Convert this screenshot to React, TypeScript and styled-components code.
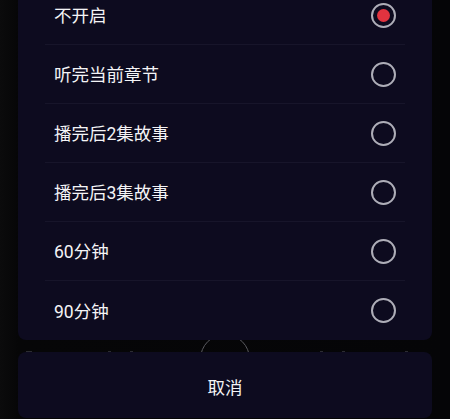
import styled, { createGlobalStyle } from "styled-components";

const GlobalStyle = createGlobalStyle`
  html, body {
    margin: 0;
    padding: 0;
    background: #050507;
  }
  body {
    font-family: Roboto, "Noto Sans CJK SC", sans-serif;
  }
`;

const options = [
  "不开启",
  "听完当前章节",
  "播完后2集故事",
  "播完后3集故事",
  "60分钟",
  "90分钟",
];

const Page = styled.div`
  position: relative;
  height: 419px;
  overflow: hidden;
  display: flex;
  flex-direction: column;
  justify-content: flex-end;
  gap: 12px;
  padding: 0 18px 1px;
  box-sizing: border-box;
  background: linear-gradient(90deg, #0b0b0c 0, #060607 18px, #050507 100%);
`;

// the player behind the sheet, only a sliver shows between the two cards
const BehindPlay = styled.div`
  position: absolute;
  left: 200px;
  top: 334px;
  width: 50px;
  height: 50px;
  border-radius: 50%;
  border: 1.5px solid #5a5a60;
  box-sizing: border-box;
`;

const BehindDot = styled.div<{ $x: number }>`
  position: absolute;
  left: ${(p) => p.$x}px;
  top: 351px;
  width: 3px;
  height: 1px;
  background: #2c2c32;
`;

const Card = styled.div`
  position: relative;
  flex-shrink: 0;
  background: #0d0b1f;
  border-radius: 8px;
  padding: 0 27px;
`;

const Row = styled.div`
  height: 59px;
  display: flex;
  align-items: center;
  justify-content: space-between;
  padding: 0 9px;
  border-bottom: 1px solid #17152a;
  box-sizing: border-box;

  &:last-child {
    border-bottom: none;
  }
`;

const Label = styled.span`
  color: #f4f4f6;
  font-size: 17.5px;
  line-height: 1;
  padding-top: 4px;
`;

const Radio = styled.span<{ $on: boolean }>`
  width: 25px;
  height: 25px;
  border-radius: 50%;
  border: 2px solid #aeaeb8;
  box-sizing: border-box;
  display: flex;
  align-items: center;
  justify-content: center;

  &::after {
    content: "";
    display: ${(p) => (p.$on ? "block" : "none")};
    width: 13px;
    height: 13px;
    border-radius: 50%;
    background: #e1333f;
  }
`;

const Cancel = styled.div`
  position: relative;
  flex-shrink: 0;
  height: 66px;
  padding-top: 2px;
  box-sizing: border-box;
  background: #0d0b1f;
  border-radius: 8px;
  display: flex;
  align-items: center;
  justify-content: center;
  color: #f4f4f6;
  font-size: 17.5px;
`;

export default function App() {
  return (
    <>
      <GlobalStyle />
      <Page>
        <BehindPlay />
        {[26, 29, 108, 130, 320, 342, 405].map((x) => (
          <BehindDot key={x} $x={x} />
        ))}
        <Card>
          {options.map((o, i) => (
            <Row key={o}>
              <Label>{o}</Label>
              <Radio $on={i === 0} />
            </Row>
          ))}
        </Card>
        <Cancel>取消</Cancel>
      </Page>
    </>
  );
}
